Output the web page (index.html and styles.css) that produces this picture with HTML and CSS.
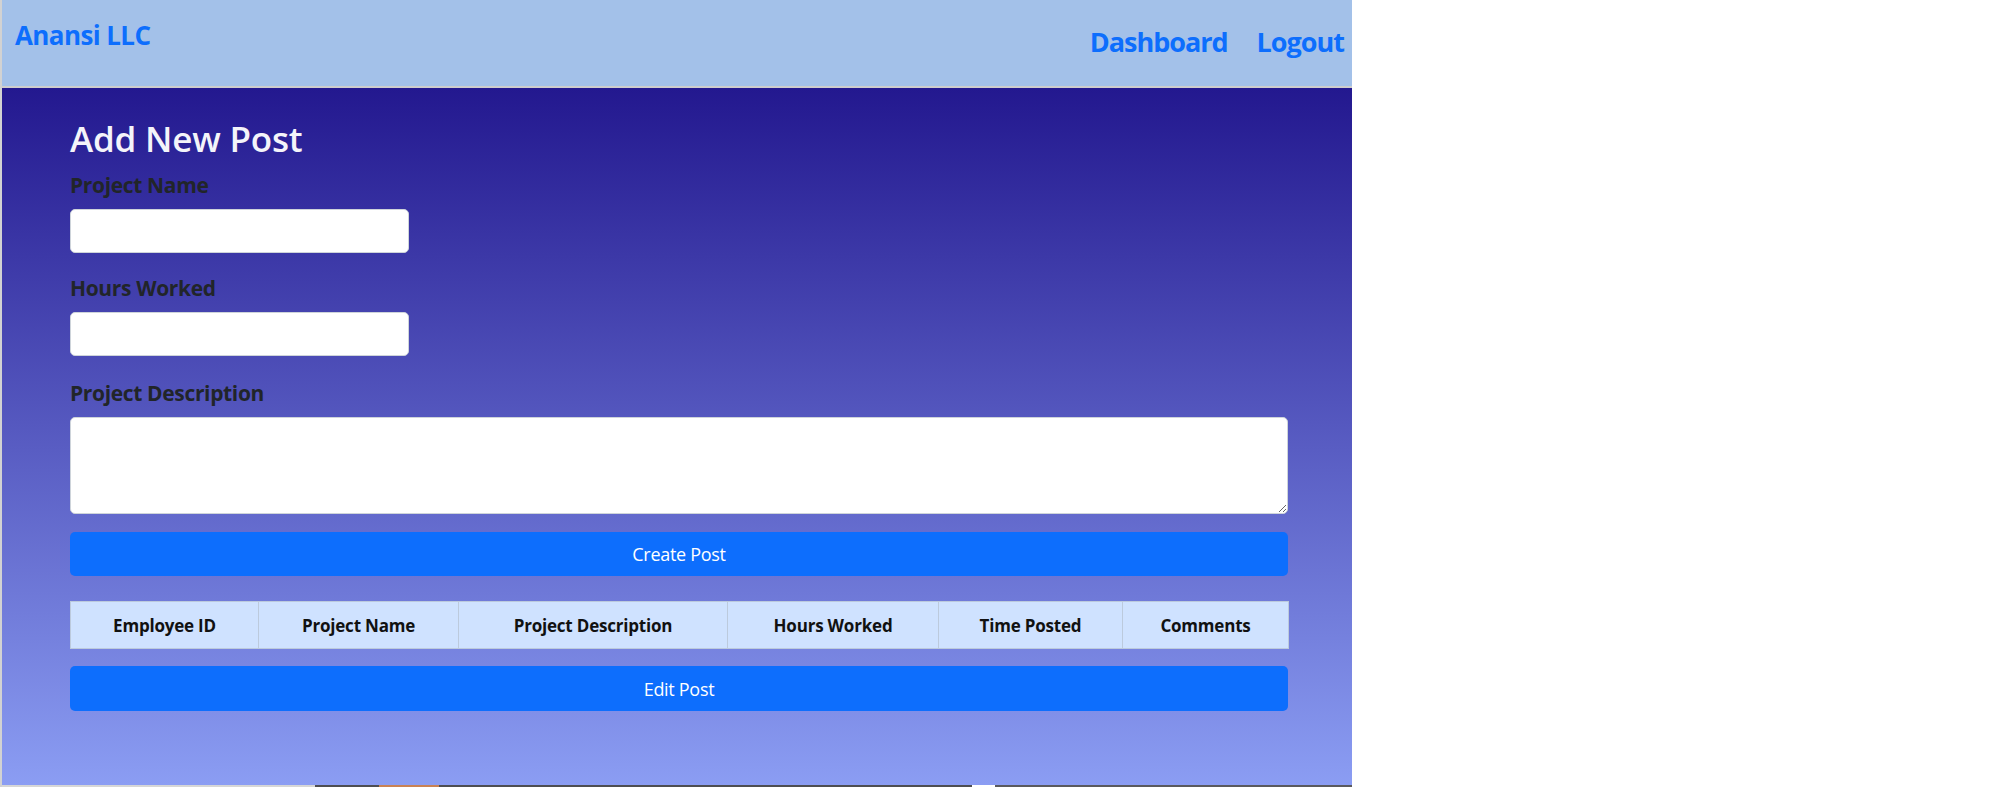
FILE: index.html
```html
<!DOCTYPE html>
<html lang="en">
<head>
<meta charset="utf-8">
<title>Add New Post</title>
<link rel="stylesheet" href="styles.css">
</head>
<body>
<div class="app">
  <nav class="navbar">
    <a class="brand" href="#">Anansi LLC</a>
    <div class="nav-links">
      <a href="#">Dashboard</a>
      <a href="#">Logout</a>
    </div>
  </nav>
  <main class="panel">
    <h1 class="title">Add New Post</h1>
    <form class="post-form">
      <label class="label" for="pname">Project Name</label>
      <input id="pname" class="field short" type="text">
      <label class="label" for="hours">Hours Worked</label>
      <input id="hours" class="field short second" type="text">
      <label class="label" for="desc">Project Description</label>
      <textarea id="desc" class="field area"></textarea>
      <button type="button" class="btn create">Create Post</button>
    </form>
    <table class="posts">
      <colgroup>
        <col class="w-emp"><col class="w-name"><col class="w-desc"><col class="w-hours"><col class="w-time"><col class="w-comm">
      </colgroup>
      <thead>
        <tr>
          <th>Employee ID</th>
          <th>Project Name</th>
          <th>Project Description</th>
          <th>Hours Worked</th>
          <th>Time Posted</th>
          <th>Comments</th>
        </tr>
      </thead>
    </table>
    <button type="button" class="btn edit">Edit Post</button>
  </main>
  <div class="taskbar">
    <span class="seg s-light"></span>
    <span class="seg s-dark1"></span>
    <span class="seg s-orange"></span>
    <span class="seg s-dark2"></span>
    <span class="seg s-gap"></span>
    <span class="seg s-dark3"></span>
  </div>
</div>
</body>
</html>
```
FILE: styles.css
```css
* { box-sizing: border-box; }

html, body {
  margin: 0;
  padding: 0;
  background: #ffffff;
}

body {
  font-family: "Open Sans", "Noto Sans", "Liberation Sans", sans-serif;
  color: #212529;
}

.app {
  width: 1352px;
  border-left: 2px solid #d2d2d2;
}

.navbar {
  height: 88px;
  background: #a3c1e9;
  border-bottom: 2px solid #cdcdcd;
  display: flex;
  justify-content: space-between;
  align-items: flex-start;
  padding: 0 8px 0 13px;
}

.brand {
  margin-top: 20px;
  font-size: 26px;
  line-height: 31px;
  font-weight: 700;
  color: #0d6efd;
  text-decoration: none;
  letter-spacing: -0.6px;
}

.nav-links {
  margin-top: 25px;
  display: flex;
  gap: 29px;
}

.nav-links a {
  font-size: 27px;
  line-height: 33px;
  font-weight: 700;
  color: #0d6efd;
  text-decoration: none;
  letter-spacing: -1px;
}

.panel {
  height: 697px;
  background: linear-gradient(to bottom, #23188f 0%, #8b9df3 100%);
  padding: 30px 62px 0 68px;
  display: flex;
  flex-direction: column;
}

.title {
  margin: 0 0 10px 0;
  font-size: 35px;
  line-height: 42px;
  font-weight: 600;
  color: #f4f4fa;
  letter-spacing: -0.2px;
}

.post-form {
  display: flex;
  flex-direction: column;
  align-items: flex-start;
}

.label {
  font-size: 21px;
  line-height: 30px;
  font-weight: 700;
  color: #212529;
  margin-bottom: 9px;
  letter-spacing: -0.35px;
}

.field {
  background: #ffffff;
  border: 1px solid #ced4da;
  border-radius: 5px;
  font-family: inherit;
  font-size: 18px;
  margin: 0 0 20px 0;
}

.short {
  width: 339px;
  height: 44px;
}

.second {
  margin-bottom: 22px;
}

.area {
  width: 1218px;
  height: 97px;
  margin-bottom: 18px;
}

.btn {
  width: 1218px;
  height: 44px;
  background: #0d6efd;
  color: #ffffff;
  border: none;
  border-radius: 5px;
  font-family: inherit;
  font-size: 18px;
  letter-spacing: -0.3px;
  padding: 0;
}

.create {
  margin-bottom: 25px;
}

.edit {
  height: 45px;
}

.posts {
  width: 1218px;
  table-layout: fixed;
  border-collapse: collapse;
  margin-bottom: 17px;
}

.w-emp { width: 188px; }
.w-name { width: 200px; }
.w-desc { width: 269px; }
.w-hours { width: 211px; }
.w-time { width: 184px; }
.w-comm { width: 166px; }

.posts th {
  height: 47px;
  padding: 0 8px;
  background: #cfe2ff;
  border: 1px solid #bccadd;
  font-size: 17px;
  font-weight: 700;
  color: #111111;
  text-align: center;
  letter-spacing: -0.2px;
}

.taskbar {
  display: flex;
  height: 2px;
}

.seg { display: block; height: 2px; }
.s-light { width: 313px; background: #d6d6d6; }
.s-dark1 { width: 64px; background: #4e4e52; }
.s-orange { width: 60px; background: #c98254; }
.s-dark2 { width: 533px; background: #4e4e52; }
.s-gap { width: 23px; background: #ffffff; }
.s-dark3 { width: 357px; background: #5a5a5e; }
```
